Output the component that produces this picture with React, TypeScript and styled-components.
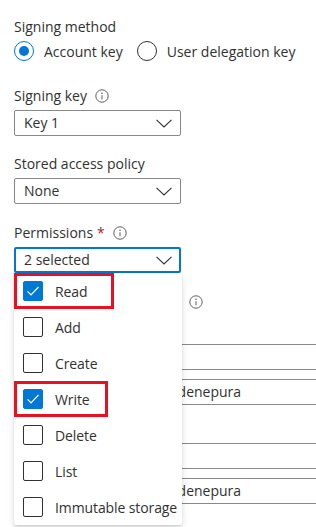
import React from 'react';
import styled, { createGlobalStyle } from 'styled-components';

const GlobalStyle = createGlobalStyle`
  html, body {
    margin: 0;
    padding: 0;
    background: #fff;
    overflow: hidden;
  }
  body {
    font-family: "Segoe UI", "Open Sans", sans-serif;
    font-size: 14px;
    color: #323130;
  }
`;

const Page = styled.div`
  width: 316px;
  height: 527px;
  overflow: hidden;
  padding: 17px 0 0 14px;
  box-sizing: border-box;
`;

const Field = styled.div<{ $gap?: number }>`
  position: relative;
  margin-bottom: ${(p) => (p.$gap ?? 18)}px;
`;

const Label = styled.div<{ $tight?: boolean }>`
  display: flex;
  align-items: center;
  gap: 8px;
  height: 20px;
  line-height: 20px;
  margin-bottom: 4px;
  white-space: nowrap;
  letter-spacing: ${(p) => (p.$tight ? '-0.15px' : 'normal')};
`;

const Required = styled.span`
  color: #a4262c;
  margin-left: -4px;
`;

const RadioRow = styled.div`
  display: flex;
  align-items: center;
  gap: 8px;
  height: 20px;
`;

const RadioOption = styled.label`
  display: flex;
  align-items: center;
  gap: 10px;
  margin-right: 6px;
`;

const RadioCircle = styled.span<{ $checked?: boolean }>`
  width: 20px;
  height: 20px;
  box-sizing: border-box;
  border-radius: 50%;
  border: 1px solid ${(p) => (p.$checked ? '#0078d4' : '#323130')};
  display: flex;
  align-items: center;
  justify-content: center;
  &::after {
    content: '';
    width: 10px;
    height: 10px;
    border-radius: 50%;
    background: ${(p) => (p.$checked ? '#0078d4' : 'transparent')};
  }
`;

const Select = styled.div<{ $focused?: boolean }>`
  width: 167px;
  height: 26px;
  box-sizing: border-box;
  border: ${(p) => (p.$focused ? '2px solid #0078d4' : '1px solid #8a8886')};
  border-radius: 2px;
  display: flex;
  align-items: center;
  justify-content: space-between;
  padding: 0 ${(p) => (p.$focused ? 7 : 8)}px 0 ${(p) => (p.$focused ? 8 : 9)}px;
  line-height: 20px;
`;

const Menu = styled.div`
  position: absolute;
  left: 0;
  top: 50px;
  width: 168px;
  background: #fff;
  border-radius: 2px;
  box-shadow: 0 3.2px 7.2px rgba(0, 0, 0, 0.13), 0 0.6px 1.8px rgba(0, 0, 0, 0.11);
  z-index: 10;
`;

const Item = styled.div`
  position: relative;
  display: flex;
  align-items: center;
  gap: 12px;
  height: 36px;
  padding-left: 9px;
  white-space: nowrap;
  letter-spacing: -0.1px;
`;

const Box = styled.span<{ $checked?: boolean }>`
  width: 20px;
  height: 20px;
  box-sizing: border-box;
  border-radius: 2px;
  border: 1px solid ${(p) => (p.$checked ? '#0078d4' : '#323130')};
  background: ${(p) => (p.$checked ? '#0078d4' : '#fff')};
  display: flex;
  align-items: center;
  justify-content: center;
`;

const Annotation = styled.span`
  position: absolute;
  left: 0;
  top: 0;
  height: 36px;
  box-sizing: border-box;
  border: 3px solid #e81123;
  pointer-events: none;
`;

const Input = styled.div<{ $gapAfter?: number }>`
  width: 340px;
  height: 26px;
  box-sizing: border-box;
  border: 1px solid #8a8886;
  border-radius: 2px;
  padding-left: 9px;
  line-height: 24px;
  white-space: nowrap;
  margin-bottom: ${(p) => p.$gapAfter ?? 0}px;
`;

const SubLabel = styled.div<{ $top: number; $bottom: number }>`
  height: 20px;
  line-height: 20px;
  margin: ${(p) => p.$top}px 0 ${(p) => p.$bottom}px;
`;

const InfoIcon = () => (
  <svg width="14" height="14" viewBox="0 0 14 14" fill="none">
    <circle cx="7" cy="7" r="6.2" stroke="#605e5c" strokeWidth="1" />
    <circle cx="7" cy="4.2" r="0.8" fill="#605e5c" />
    <path d="M7 6.2 V10.4" stroke="#605e5c" strokeWidth="1" />
  </svg>
);

const Chevron = () => (
  <svg width="16" height="9" viewBox="0 0 16 9" fill="none">
    <path d="M0.5 0.8 L8 8 L15.5 0.8" stroke="#323130" strokeWidth="1.1" />
  </svg>
);

const Check = () => (
  <svg width="14" height="12" viewBox="0 0 14 12" fill="none">
    <path d="M1.5 6.4 L5 9.8 L12.5 2" stroke="#fff" strokeWidth="1.2" />
  </svg>
);

const permissions = [
  { name: 'Read', checked: true, mark: 100 },
  { name: 'Add', checked: false },
  { name: 'Create', checked: false },
  { name: 'Write', checked: true, mark: 94 },
  { name: 'Delete', checked: false },
  { name: 'List', checked: false },
  { name: 'Immutable storage', checked: false },
];

const App: React.FC = () => {
  return (
    <Page>
      <GlobalStyle />
      <Field $gap={25}>
        <Label>Signing method</Label>
        <RadioRow>
          <RadioOption>
            <RadioCircle $checked />
            Account key
          </RadioOption>
          <RadioOption>
            <RadioCircle />
            User delegation key
          </RadioOption>
        </RadioRow>
      </Field>

      <Field>
        <Label>
          Signing key <InfoIcon />
        </Label>
        <Select>
          Key 1 <Chevron />
        </Select>
      </Field>

      <Field $gap={19}>
        <Label>Stored access policy</Label>
        <Select>
          None <Chevron />
        </Select>
      </Field>

      <Field $gap={19}>
        <Label>
          Permissions <Required>*</Required> <InfoIcon />
        </Label>
        <Select $focused>
          2 selected <Chevron />
        </Select>
        <Menu>
          {permissions.map((p) => (
            <Item key={p.name}>
              <Box $checked={p.checked}>{p.checked && <Check />}</Box>
              {p.name}
              {p.mark && <Annotation style={{ width: p.mark }} />}
            </Item>
          ))}
        </Menu>
      </Field>

      <Field>
        <Label $tight>
          Start and expiry date/time <InfoIcon />
        </Label>
        <SubLabel $top={4} $bottom={8}>Start</SubLabel>
        <Input $gapAfter={9} />
        <Input>(UTC+05:30) Sri Jayawardenepura</Input>
        <SubLabel $top={8} $bottom={10}>Expiry</SubLabel>
        <Input $gapAfter={9} />
        <Input>(UTC+05:30) Sri Jayawardenepura</Input>
      </Field>
    </Page>
  );
};

export default App;
